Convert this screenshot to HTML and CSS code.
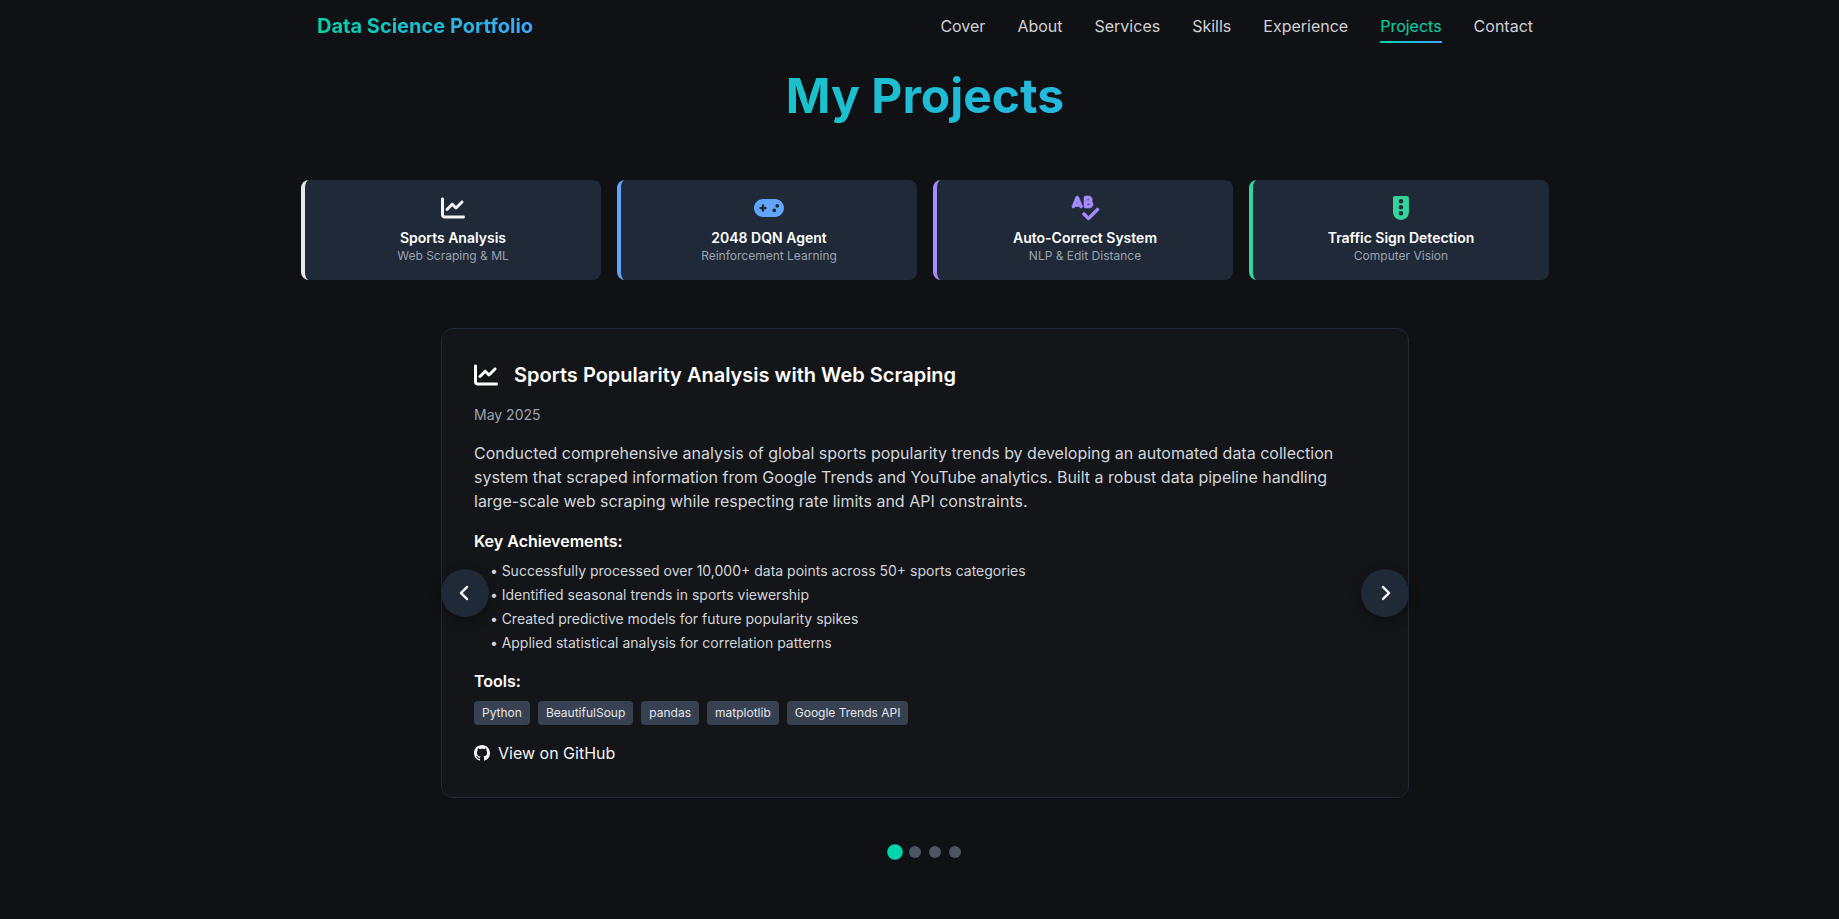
FILE: index.html
```html
<!DOCTYPE html>
<html lang="en">
<head>
<meta charset="utf-8">
<meta name="viewport" content="width=device-width, initial-scale=1">
<title>Data Science Portfolio</title>
<link rel="stylesheet" href="styles.css">
</head>
<body>
<header class="site-header">
  <a class="brand" href="#cover">Data Science Portfolio</a>
  <nav class="nav" aria-label="Main">
    <a class="nav-link" href="#cover">Cover</a>
    <a class="nav-link" href="#about">About</a>
    <a class="nav-link" href="#services">Services</a>
    <a class="nav-link" href="#skills">Skills</a>
    <a class="nav-link" href="#experience">Experience</a>
    <a class="nav-link nav-link-active" href="#projects" aria-current="page">Projects</a>
    <a class="nav-link" href="#contact">Contact</a>
  </nav>
</header>
<main class="projects" id="projects">
  <h1 class="title">My Projects</h1>
  <div class="tabs">
    <button class="tab tab-white" type="button">
      <svg class="icon" viewBox="0 0 512 512" aria-hidden="true"><path d="M64 64c0-17.7-14.3-32-32-32S0 46.3 0 64V400c0 44.2 35.8 80 80 80H480c17.7 0 32-14.3 32-32s-14.3-32-32-32H80c-8.8 0-16-7.2-16-16V64zm406.6 86.6c12.5-12.5 12.5-32.8 0-45.3s-32.8-12.5-45.3 0L320 210.7l-57.4-57.4c-12.5-12.5-32.8-12.5-45.3 0l-112 112c-12.5 12.5-12.5 32.8 0 45.3s32.8 12.5 45.3 0L240 221.3l57.4 57.4c12.5 12.5 32.8 12.5 45.3 0l128-128z"/></svg>
      <span class="tab-name">Sports Analysis</span>
      <span class="tab-topic">Web Scraping &amp; ML</span>
    </button>
    <button class="tab tab-blue" type="button">
      <svg class="icon" viewBox="0 0 640 512" aria-hidden="true"><path d="M192 64C86 64 0 150 0 256S86 448 192 448H448c106 0 192-86 192-192s-86-192-192-192H192zM496 168a40 40 0 1 1 0 80 40 40 0 1 1 0-80zM392 304a40 40 0 1 1 80 0 40 40 0 1 1 -80 0zM168 200c0-13.3 10.7-24 24-24s24 10.7 24 24v32h32c13.3 0 24 10.7 24 24s-10.7 24-24 24H216v32c0 13.3-10.7 24-24 24s-24-10.7-24-24V280H136c-13.3 0-24-10.7-24-24s10.7-24 24-24h32V200z"/></svg>
      <span class="tab-name">2048 DQN Agent</span>
      <span class="tab-topic">Reinforcement Learning</span>
    </button>
    <button class="tab tab-purple" type="button">
      <svg class="icon icon-bold" viewBox="0 0 576 512" aria-hidden="true"><path d="M112 0C99.1 0 87.4 7.8 82.5 19.7l-66.7 160-13.3 32c-6.8 16.3 .9 35 17.2 41.8s35-.9 41.8-17.2L66.7 224h90.7l5.1 12.3c6.8 16.3 25.5 24 41.8 17.2s24-25.5 17.2-41.8l-13.3-32-66.7-160C136.6 7.8 124.9 0 112 0zm18.7 160H93.3L112 115.2 130.7 160zM256 32v96 96c0 17.7 14.3 32 32 32h80c44.2 0 80-35.8 80-80c0-23.1-9.8-43.8-25.4-58.4c6-11.2 9.4-24 9.4-37.6c0-44.2-35.8-80-80-80H288c-17.7 0-32 14.3-32 32zm96 64H320V64h32c8.8 0 16 7.2 16 16s-7.2 16-16 16zm-32 64h32 16c8.8 0 16 7.2 16 16s-7.2 16-16 16H320V160zM566.6 310.6c12.5-12.5 12.5-32.8 0-45.3s-32.8-12.5-45.3 0L352 434.7l-73.4-73.4c-12.5-12.5-32.8-12.5-45.3 0s-12.5 32.8 0 45.3l96 96c12.5 12.5 32.8 12.5 45.3 0l192-192z"/></svg>
      <span class="tab-name">Auto-Correct System</span>
      <span class="tab-topic">NLP &amp; Edit Distance</span>
    </button>
    <button class="tab tab-green" type="button">
      <svg class="icon" viewBox="-10 0 341 512" aria-hidden="true"><path d="M32 0C5 0-10 15-10 42V342c0 94 76 170 170 170s170-76 170-170V42c0-27-15-42-42-42H32zm128 416a48 48 0 1 1 0-96 48 48 0 1 1 0 96zm48-176a48 48 0 1 1 -96 0 48 48 0 1 1 96 0zm-48-80a48 48 0 1 1 0-96 48 48 0 1 1 0 96z"/></svg>
      <span class="tab-name">Traffic Sign Detection</span>
      <span class="tab-topic">Computer Vision</span>
    </button>
  </div>
  <section class="carousel" aria-label="Project details">
    <article class="card">
      <header class="card-head">
        <svg class="icon" viewBox="0 0 512 512" aria-hidden="true"><path d="M64 64c0-17.7-14.3-32-32-32S0 46.3 0 64V400c0 44.2 35.8 80 80 80H480c17.7 0 32-14.3 32-32s-14.3-32-32-32H80c-8.8 0-16-7.2-16-16V64zm406.6 86.6c12.5-12.5 12.5-32.8 0-45.3s-32.8-12.5-45.3 0L320 210.7l-57.4-57.4c-12.5-12.5-32.8-12.5-45.3 0l-112 112c-12.5 12.5-12.5 32.8 0 45.3s32.8 12.5 45.3 0L240 221.3l57.4 57.4c12.5 12.5 32.8 12.5 45.3 0l128-128z"/></svg>
        <h2 class="card-title">Sports Popularity Analysis with Web Scraping</h2>
      </header>
      <p class="date">May 2025</p>
      <p class="summary">Conducted comprehensive analysis of global sports popularity trends by developing an automated data collection system that scraped information from Google Trends and YouTube analytics. Built a robust data pipeline handling large-scale web scraping while respecting rate limits and API constraints.</p>
      <div class="block">
        <h3 class="block-title">Key Achievements:</h3>
        <ul class="achievements">
          <li>Successfully processed over 10,000+ data points across 50+ sports categories</li>
          <li>Identified seasonal trends in sports viewership</li>
          <li>Created predictive models for future popularity spikes</li>
          <li>Applied statistical analysis for correlation patterns</li>
        </ul>
      </div>
      <div class="block">
        <h3 class="block-title">Tools:</h3>
        <ul class="tags">
          <li class="tag">Python</li>
          <li class="tag">BeautifulSoup</li>
          <li class="tag">pandas</li>
          <li class="tag">matplotlib</li>
          <li class="tag">Google Trends API</li>
        </ul>
      </div>
      <a class="repo" href="#github">
        <svg class="icon-small" viewBox="0 0 16 16" aria-hidden="true"><path d="M8 0C3.58 0 0 3.58 0 8c0 3.54 2.29 6.53 5.47 7.59.4.07.55-.17.55-.38 0-.19-.01-.82-.01-1.49-2.01.37-2.53-.49-2.69-.94-.09-.23-.48-.94-.82-1.13-.28-.15-.68-.52-.01-.53.63-.01 1.08.58 1.23.82.72 1.21 1.87.87 2.33.66.07-.52.28-.87.51-1.07-1.78-.2-3.64-.89-3.64-3.95 0-.87.31-1.59.82-2.15-.08-.2-.36-1.02.08-2.12 0 0 .67-.21 2.2.82.64-.18 1.32-.27 2-.27.68 0 1.36.09 2 .27 1.53-1.04 2.2-.82 2.2-.82.44 1.1.16 1.92.08 2.12.51.56.82 1.27.82 2.15 0 3.07-1.87 3.75-3.65 3.95.29.25.54.73.54 1.48 0 1.07-.01 1.93-.01 2.2 0 .21.15.46.55.38A8.013 8.013 0 0016 8c0-4.42-3.58-8-8-8z"/></svg>
        View on GitHub
      </a>
    </article>
    <div class="dots">
      <button class="dot dot-active" type="button" aria-label="Project 1"></button>
      <button class="dot" type="button" aria-label="Project 2"></button>
      <button class="dot" type="button" aria-label="Project 3"></button>
      <button class="dot" type="button" aria-label="Project 4"></button>
    </div>
    <button class="arrow arrow-prev" type="button" aria-label="Previous project">
      <svg class="icon-small icon-bold" viewBox="0 0 320 512" aria-hidden="true"><path d="M9.4 233.4c-12.5 12.5-12.5 32.8 0 45.3l192 192c12.5 12.5 32.8 12.5 45.3 0s12.5-32.8 0-45.3L77.3 256 246.6 86.6c12.5-12.5 12.5-32.8 0-45.3s-32.8-12.5-45.3 0l-192 192z"/></svg>
    </button>
    <button class="arrow arrow-next" type="button" aria-label="Next project">
      <svg class="icon-small icon-bold" viewBox="0 0 320 512" aria-hidden="true"><path d="M310.6 233.4c12.5 12.5 12.5 32.8 0 45.3l-192 192c-12.5 12.5-32.8 12.5-45.3 0s-12.5-32.8 0-45.3L242.7 256 73.4 86.6c-12.5-12.5-12.5-32.8 0-45.3s32.8-12.5 45.3 0l192 192z"/></svg>
    </button>
  </section>
</main>
</body>
</html>
```

FILE: styles.css
```css
:root {
  --bg: #101114;
  --surface: #141518;
  --panel: #1f2937;
  --accent: #00d4aa;
  --gradient: linear-gradient(90deg, #00d4aa, #3ea6ff);
}

* {
  box-sizing: border-box;
  margin: 0;
  padding: 0;
}

body {
  padding-left: 11px;
  background: var(--bg);
  color: #fff;
  font-family: Inter, "Liberation Sans", sans-serif;
  font-size: 16px;
  line-height: 24px;
}

button {
  border: 0;
  color: inherit;
  font: inherit;
  cursor: pointer;
}

a {
  color: inherit;
  text-decoration: none;
}

ul {
  list-style: none;
}

.icon {
  height: 24px;
  fill: currentColor;
}

.icon-small {
  height: 16px;
  fill: currentColor;
}

.icon-bold {
  overflow: visible;
  stroke: currentColor;
  stroke-width: 14;
}

.site-header {
  display: flex;
  align-items: center;
  justify-content: space-between;
  max-width: 1280px;
  margin: 0 auto;
  padding: 12px 32px;
}

.brand,
.title {
  background: var(--gradient);
  background-clip: text;
  -webkit-background-clip: text;
  color: transparent;
}

.brand {
  font-size: 20px;
  font-weight: 700;
  line-height: 28px;
}

.nav {
  display: flex;
  gap: 32px;
}

.nav-link {
  position: relative;
  color: #d0d0d3;
}

.nav-link-active {
  color: var(--accent);
}

.nav-link-active::after {
  content: "";
  position: absolute;
  left: 0;
  right: 0;
  bottom: -5px;
  height: 2px;
  background: var(--gradient);
}

.projects {
  max-width: 1280px;
  margin: 0 auto;
  padding: 20px 16px 48px;
}

.title {
  margin-bottom: 48px;
  padding-bottom: 12px;
  font-size: 48px;
  font-weight: 700;
  line-height: 48px;
  text-align: center;
}

.tabs {
  display: grid;
  grid-template-columns: repeat(4, 1fr);
  gap: 16px;
  margin-bottom: 48px;
}

.tab {
  display: flex;
  flex-direction: column;
  align-items: center;
  padding: 16px;
  border-left: 4px solid;
  border-radius: 8px;
  background: var(--panel);
}

.tab .icon {
  margin-bottom: 8px;
}

.tab-white {
  color: #e5e7eb;
}

.tab-white .icon {
  color: #f3f4f6;
}

.tab-blue {
  color: #60a5fa;
}

.tab-purple {
  color: #a78bfa;
}

.tab-green {
  color: #34d399;
}

.tab-name {
  color: #fff;
  font-size: 14px;
  font-weight: 600;
  line-height: 20px;
}

.tab-topic {
  color: #9ca3af;
  font-size: 12px;
  line-height: 16px;
}

.carousel {
  position: relative;
  max-width: 968px;
  margin: 0 auto;
}

.card {
  display: flex;
  flex-direction: column;
  gap: 16px;
  padding: 32px;
  border: 1px solid var(--panel);
  border-radius: 12px;
  background: var(--surface);
}

.card-head {
  display: flex;
  align-items: center;
  gap: 16px;
}

.card-title {
  font-size: 20px;
  font-weight: 600;
  line-height: 28px;
}

.date {
  color: #9ca3af;
  font-size: 14px;
  line-height: 20px;
}

.summary {
  color: #d1d5db;
}

.block {
  display: flex;
  flex-direction: column;
  gap: 8px;
}

.block-title {
  font-size: 16px;
  font-weight: 600;
}

.achievements {
  display: flex;
  flex-direction: column;
  gap: 4px;
  padding-left: 16px;
  color: #d1d5db;
  font-size: 14px;
  line-height: 20px;
  list-style: "• " inside;
}

.tags {
  display: flex;
  flex-wrap: wrap;
  gap: 8px;
}

.tag {
  padding: 4px 8px;
  border-radius: 4px;
  background: #374151;
  color: #e5e7eb;
  font-size: 12px;
  line-height: 16px;
}

.repo {
  display: flex;
  align-items: center;
  align-self: flex-start;
  gap: 8px;
  color: #f3f4f6;
}

.dots {
  display: flex;
  justify-content: center;
  gap: 8px;
  margin-top: 48px;
}

.dot {
  width: 12px;
  height: 12px;
  border-radius: 50%;
  background: #4b5563;
}

.dot-active {
  background: var(--accent);
  transform: scale(1.3);
}

.arrow {
  position: absolute;
  top: 50%;
  display: flex;
  align-items: center;
  justify-content: center;
  width: 48px;
  height: 48px;
  border-radius: 50%;
  background: var(--panel);
  box-shadow: 0 4px 12px rgba(0, 0, 0, 0.3);
  transform: translateY(-50%);
}

.arrow-prev {
  left: 0;
}

.arrow-next {
  right: 0;
}
```
